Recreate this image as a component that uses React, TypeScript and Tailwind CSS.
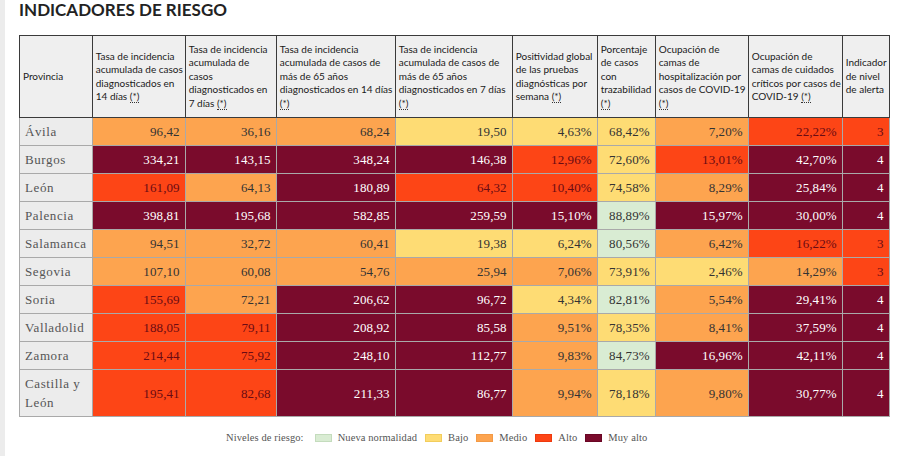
import * as React from "react";

type Nivel = "g" | "b" | "m" | "a" | "v";

const nivelClases: Record<Nivel, string> = {
  g: "bg-[#d9ecd3] text-[#333333]",
  b: "bg-[#fedc74] text-[#333333]",
  m: "bg-[#fda44f] text-[#333333]",
  a: "bg-[#fd4516] text-[#6a0b14]",
  v: "bg-[#7a0b2c] text-white",
};

// lineas del encabezado tal como se cortan en la tabla original
const columnas: { lineas: string[]; nota: "fin" | "sola" | null; ancho: string }[] = [
  { lineas: ["Provincia"], nota: null, ancho: "w-[72px]" },
  { lineas: ["Tasa de incidencia", "acumulada de casos", "diagnosticados en", "14 días"], nota: "fin", ancho: "w-[93px]" },
  { lineas: ["Tasa de incidencia", "acumulada de", "casos", "diagnosticados en", "7 días"], nota: "fin", ancho: "w-[91px]" },
  { lineas: ["Tasa de incidencia", "acumulada de casos de", "más de 65 años", "diagnosticados en 14 días"], nota: "sola", ancho: "w-[119px]" },
  { lineas: ["Tasa de incidencia", "acumulada de casos de", "más de 65 años", "diagnosticados en 7 días"], nota: "sola", ancho: "w-[117px]" },
  { lineas: ["Positividad global", "de las pruebas", "diagnósticas por", "semana"], nota: "fin", ancho: "w-[85px]" },
  { lineas: ["Porcentaje", "de casos", "con", "trazabilidad"], nota: "sola", ancho: "w-[58px]" },
  { lineas: ["Ocupación de", "camas de", "hospitalización por", "casos de COVID-19"], nota: "sola", ancho: "w-[93px]" },
  { lineas: ["Ocupación de", "camas de cuidados", "críticos por casos de", "COVID-19"], nota: "fin", ancho: "w-[94px]" },
  { lineas: ["Indicador", "de nivel", "de alerta"], nota: null, ancho: "w-[47px]" },
];

const filas: { provincia: string; valores: [string, Nivel][] }[] = [
  { provincia: "Ávila", valores: [["96,42", "m"], ["36,16", "m"], ["68,24", "m"], ["19,50", "b"], ["4,63%", "b"], ["68,42%", "b"], ["7,20%", "m"], ["22,22%", "a"], ["3", "a"]] },
  { provincia: "Burgos", valores: [["334,21", "v"], ["143,15", "v"], ["348,24", "v"], ["146,38", "v"], ["12,96%", "a"], ["72,60%", "b"], ["13,01%", "a"], ["42,70%", "v"], ["4", "v"]] },
  { provincia: "León", valores: [["161,09", "a"], ["64,13", "m"], ["180,89", "v"], ["64,32", "a"], ["10,40%", "a"], ["74,58%", "b"], ["8,29%", "m"], ["25,84%", "v"], ["4", "v"]] },
  { provincia: "Palencia", valores: [["398,81", "v"], ["195,68", "v"], ["582,85", "v"], ["259,59", "v"], ["15,10%", "v"], ["88,89%", "g"], ["15,97%", "v"], ["30,00%", "v"], ["4", "v"]] },
  { provincia: "Salamanca", valores: [["94,51", "m"], ["32,72", "m"], ["60,41", "m"], ["19,38", "b"], ["6,24%", "b"], ["80,56%", "g"], ["6,42%", "m"], ["16,22%", "a"], ["3", "a"]] },
  { provincia: "Segovia", valores: [["107,10", "m"], ["60,08", "m"], ["54,76", "m"], ["25,94", "m"], ["7,06%", "m"], ["73,91%", "b"], ["2,46%", "b"], ["14,29%", "m"], ["3", "a"]] },
  { provincia: "Soria", valores: [["155,69", "a"], ["72,21", "m"], ["206,62", "v"], ["96,72", "v"], ["4,34%", "b"], ["82,81%", "g"], ["5,54%", "m"], ["29,41%", "v"], ["4", "v"]] },
  { provincia: "Valladolid", valores: [["188,05", "a"], ["79,11", "a"], ["208,92", "v"], ["85,58", "v"], ["9,51%", "m"], ["78,35%", "b"], ["8,41%", "m"], ["37,59%", "v"], ["4", "v"]] },
  { provincia: "Zamora", valores: [["214,44", "a"], ["75,92", "a"], ["248,10", "v"], ["112,77", "v"], ["9,83%", "m"], ["84,73%", "g"], ["16,96%", "v"], ["42,11%", "v"], ["4", "v"]] },
  { provincia: "Castilla y León", valores: [["195,41", "a"], ["82,68", "a"], ["211,33", "v"], ["86,77", "v"], ["9,94%", "m"], ["78,18%", "b"], ["9,80%", "m"], ["30,77%", "v"], ["4", "v"]] },
];

const leyenda: [string, string][] = [
  ["Nueva normalidad", "bg-[#d9ecd3] border-[#c4dcbd]"],
  ["Bajo", "bg-[#fedc74] border-[#f2cd5c]"],
  ["Medio", "bg-[#fda44f] border-[#f39a45]"],
  ["Alto", "bg-[#fd4516] border-[#ee3a0e]"],
  ["Muy alto", "bg-[#7a0b2c] border-[#6a0625]"],
];

function Nota() {
  return <span className="border-b border-dotted border-[#333333] leading-[11px]">(*)</span>;
}

export default function App() {
  return (
    <div className="min-h-[456px] w-[900px] border-l-[5px] border-[#ececec] bg-white">
      <h2 className="pl-[14px] pt-[1px] font-['Lato',sans-serif] text-[17px] font-bold leading-[17px] text-[#222222]">
        INDICADORES DE RIESGO
      </h2>

      <table className="ml-[14px] mt-[17px] table-fixed border-collapse">
        <colgroup>
          {columnas.map((c) => (
            <col key={c.lineas.join(" ")} className={c.ancho} />
          ))}
        </colgroup>
        <thead>
          <tr className="h-[82px]">
            {columnas.map((c) => (
              <th
                key={c.lineas.join(" ")}
                className="overflow-hidden whitespace-nowrap border border-[#3a3a3a] bg-[#efefef] pl-[3px] pr-0 text-left align-middle font-['Lato',sans-serif] text-[10px] font-normal leading-[13.4px] text-[#1a1a1a]"
              >
                {c.lineas.map((l, i) => (
                  <div key={i}>
                    {l}
                    {c.nota === "fin" && i === c.lineas.length - 1 && (
                      <>
                        {" "}
                        <Nota />
                      </>
                    )}
                  </div>
                ))}
                {c.nota === "sola" && (
                  <div>
                    <Nota />
                  </div>
                )}
              </th>
            ))}
          </tr>
        </thead>
        <tbody className="font-['Liberation_Serif',serif] text-[13px] leading-[19px]">
          {filas.map((f) => (
            <tr key={f.provincia} className="h-[28px]">
              <td className="border border-[#a9a9a9] bg-[#ececec] px-[5px] py-[4px] text-left tracking-[0.6px] text-[#555555]">
                {f.provincia}
              </td>
              {f.valores.map(([v, n], i) => (
                <td
                  key={i}
                  className={`border border-[#a9a9a9] pr-[5px] text-right tracking-[0.1px] ${nivelClases[n]}`}
                >
                  {v}
                </td>
              ))}
            </tr>
          ))}
        </tbody>
      </table>

      <div className="mt-[13px] flex items-center pl-[221px] font-['Liberation_Serif',serif] text-[10.5px] tracking-[0.1px] text-[#555555]">
        <span className="mr-[11px]">Niveles de riesgo:</span>
        {leyenda.map(([t, c]) => (
          <span key={t} className="mr-[8px] flex items-center">
            <span className={`mr-[6px] inline-block h-[8px] w-[17px] border ${c}`} />
            {t}
          </span>
        ))}
      </div>
    </div>
  );
}
